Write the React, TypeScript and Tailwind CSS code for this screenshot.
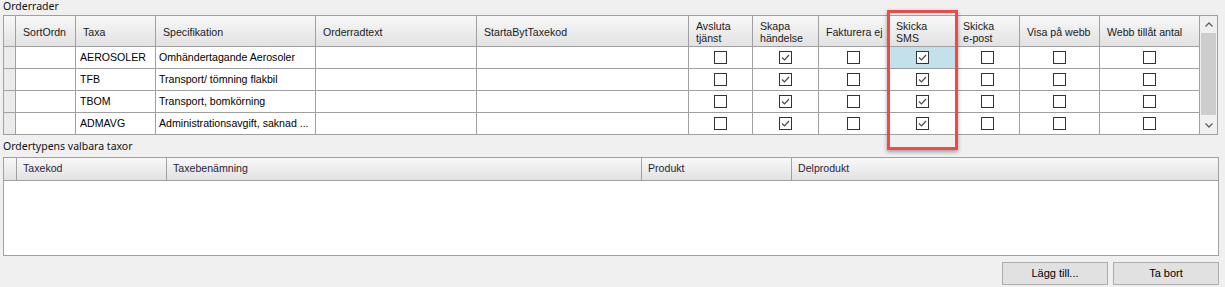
import { Fragment } from "react";

interface Col {
  title: string[];
  width: number;
  check?: boolean;
}

const cols: Col[] = [
  { title: ["SortOrdn"], width: 60 },
  { title: ["Taxa"], width: 80 },
  { title: ["Specifikation"], width: 160 },
  { title: ["Orderradtext"], width: 161 },
  { title: ["StartaBytTaxekod"], width: 212 },
  { title: ["Avsluta", "tjänst"], width: 64, check: true },
  { title: ["Skapa", "händelse"], width: 66, check: true },
  { title: ["Fakturera ej"], width: 70, check: true },
  { title: ["Skicka", "SMS"], width: 67, check: true },
  { title: ["Skicka", "e-post"], width: 64, check: true },
  { title: ["Visa på webb"], width: 80, check: true },
  { title: ["Webb tillåt antal"], width: 100, check: true },
];

const rows = [
  { taxa: "AEROSOLER", spec: "Omhändertagande Aerosoler" },
  { taxa: "TFB", spec: "Transport/ tömning flakbil" },
  { taxa: "TBOM", spec: "Transport, bomkörning" },
  { taxa: "ADMAVG", spec: "Administrationsavgift, saknad ..." },
];

// which check columns are ticked (index into cols)
const ticked = [6, 8];

const lowerCols = [
  { title: "Taxekod", width: 150 },
  { title: "Taxebenämning", width: 475 },
  { title: "Produkt", width: 150 },
  { title: "Delprodukt", width: 426 },
];

const CheckBox = ({ checked }: { checked: boolean }) => (
  <div className="relative h-[13px] w-[13px] border border-[#333] bg-white">
    {checked && (
      <svg
        viewBox="0 0 11 11"
        className="absolute left-0 top-0 h-[11px] w-[11px]"
      >
        <path
          d="M2 5.5 L4.5 8 L9 3"
          fill="none"
          stroke="#4a4a4a"
          strokeWidth="1.2"
        />
      </svg>
    )}
  </div>
);

const headerBg = "bg-gradient-to-b from-[#f8f8f8] to-[#e2e2e2]";

export default function App() {
  return (
    <div className="relative h-[287px] w-[1225px] overflow-hidden bg-[#f0f0f0] font-['Liberation_Sans',Arial,sans-serif] text-[10.6px] text-black">
      <div className="h-[15px] pl-[3px] font-['Noto_Sans',sans-serif] text-[10.5px] leading-[13px] text-[#111]">
        Orderrader
      </div>

      {/* Orderrader grid */}
      <div className="ml-[3px] flex h-[120px] w-[1215px] border border-[#a0a0a0] bg-white">
        <div className="flex flex-col">
          <div className={`flex h-[31px] border-b border-[#a0a0a0] ${headerBg}`}>
            <div className="w-[12px] border-r border-[#a0a0a0]" />
            {cols.map((c, i) => (
              <div
                key={i}
                style={{ width: c.width }}
                className="flex flex-col justify-center border-r border-[#a0a0a0] pl-[7px] pt-[1px] leading-[12px] text-[#1a1a1a]"
              >
                {c.title.map((t) => (
                  <span key={t} className="whitespace-nowrap">
                    {t}
                  </span>
                ))}
              </div>
            ))}
          </div>
          {rows.map((r, ri) => (
            <div
              key={r.taxa}
              className={`flex ${
                ri < rows.length - 1
                  ? "h-[22px] border-b border-[#a0a0a0]"
                  : "h-[21px]"
              }`}
            >
              <div className="w-[12px] border-r border-[#a0a0a0] bg-[#ebebeb]" />
              {cols.map((c, ci) => (
                <Fragment key={ci}>
                  <div
                    style={{ width: c.width }}
                    className={`flex items-center border-r border-[#a0a0a0] ${
                      c.check ? "justify-center" : "pl-[3px]"
                    } ${ri === 0 && ci === 8 ? "bg-[#c3e1ea]" : ""}`}
                  >
                    {ci === 1 && <span className="pl-[1px]">{r.taxa}</span>}
                    {ci === 2 && <span>{r.spec}</span>}
                    {c.check && <CheckBox checked={ticked.includes(ci)} />}
                  </div>
                </Fragment>
              ))}
            </div>
          ))}
        </div>

        {/* scrollbar */}
        <div className="flex w-[17px] flex-col items-center bg-[#f0f0f0]">
          <div className="flex h-[17px] w-full items-center justify-center">
            <svg viewBox="0 0 8 5" className="h-[5px] w-[8px]">
              <path d="M0.5 4.5 L4 1 L7.5 4.5" fill="none" stroke="#606060" strokeWidth="1.3" />
            </svg>
          </div>
          <div className="h-[82px] w-[15px] bg-[#cdcdcd]" />
          <div className="flex-1" />
          <div className="flex h-[17px] w-full items-center justify-center">
            <svg viewBox="0 0 8 5" className="h-[5px] w-[8px]">
              <path d="M0.5 0.5 L4 4 L7.5 0.5" fill="none" stroke="#606060" strokeWidth="1.3" />
            </svg>
          </div>
        </div>
      </div>

      <div className="h-[22px] pl-[3px] pt-[5px] font-['Noto_Sans',sans-serif] text-[10.5px] leading-[13px] text-[#111]">
        Ordertypens valbara taxor
      </div>

      {/* Ordertypens valbara taxor grid */}
      <div className="ml-[3px] flex h-[99px] w-[1216px] flex-col border border-[#a0a0a0] bg-white">
        <div className={`flex h-[23px] border-b border-[#a0a0a0] ${headerBg}`}>
          <div className="w-[13px] border-r border-[#a0a0a0]" />
          {lowerCols.map((c, i) => (
            <div
              key={c.title}
              style={{ width: c.width }}
              className={`flex items-center pl-[6px] text-[#2a1f3d] ${
                i < lowerCols.length - 1 ? "border-r border-[#a0a0a0]" : ""
              }`}
            >
              {c.title}
            </div>
          ))}
        </div>
        <div className="flex-1" />
      </div>

      <div className="mt-[6px] flex justify-end gap-[5px] pr-[6px]">
        <button className="h-[23px] w-[106px] border border-[#adadad] bg-[#e1e1e1] text-[11px] text-black">
          Lägg till...
        </button>
        <button className="h-[23px] w-[106px] border border-[#adadad] bg-[#e1e1e1] text-[11px] text-black">
          Ta bort
        </button>
      </div>

      {/* annotation box */}
      <div className="absolute left-[887px] top-[10px] h-[140px] w-[71px] border-[3px] border-[#f14848] shadow-[0_2px_4px_rgba(0,0,0,0.35)]" />
    </div>
  );
}
